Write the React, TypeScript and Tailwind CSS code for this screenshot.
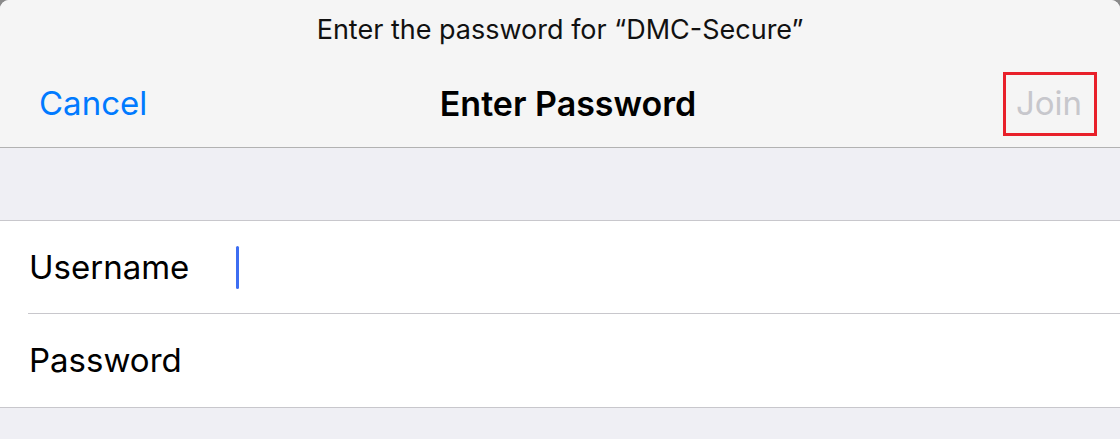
import React from 'react';

const FieldRow = ({ label, focused = false, divider = false }: { label: string; focused?: boolean; divider?: boolean }) => (
  <div className="pl-[28px]">
    <div className={`flex items-center h-[93px] ${divider ? 'border-b border-[#c8c7cc]' : ''}`}>
      <span className="w-[208px] pl-[1px] text-[33px] text-black leading-none">{label}</span>
      {focused && <span className="w-[3px] h-[43px] rounded-full bg-[#3d6ef2]" />}
    </div>
  </div>
);

export default function App() {
  return (
    <div className="w-[1120px] h-[439px] bg-[#8a8a8a] overflow-hidden" style={{ fontFamily: 'Inter, "Noto Sans", sans-serif' }}>
      <div className="h-full bg-[#efeff4] rounded-t-[9px] overflow-hidden flex flex-col">
        <header className="h-[148px] bg-[#f5f5f5] border-b border-[#b2b2b2] flex flex-col">
          <p className="pt-[15px] h-[58px] text-center text-[27px] text-[#111] leading-[30px]">
            Enter the password for “DMC-Secure”
          </p>
          <div className="flex-1 flex items-center justify-between pl-[39px] pr-[23px] pt-[2px]">
            <button className="text-[33px] text-[#007aff] w-[200px] text-left leading-none">Cancel</button>
            <h1 className="text-[34px] font-semibold text-black leading-none">Enter Password</h1>
            <div className="w-[200px] flex justify-end">
              <div className="w-[94px] h-[64px] border-[3px] border-[#e8202a] flex items-center justify-center pr-[2px]">
                <span className="text-[33px] text-[#c7c7cc] leading-none">Join</span>
              </div>
            </div>
          </div>
        </header>
        <div className="h-[72px]" />
        <section className="bg-white border-t border-b border-[#c8c7cc]">
          <FieldRow label="Username" focused divider />
          <FieldRow label="Password" />
        </section>
      </div>
    </div>
  );
}
